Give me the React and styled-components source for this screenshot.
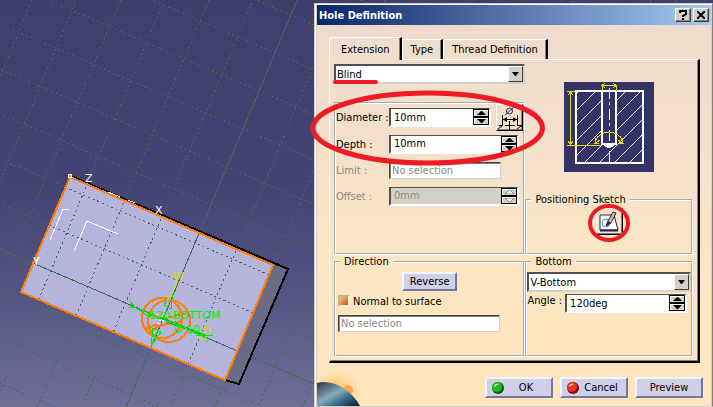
import React, { useState } from 'react'
import styled, { createGlobalStyle } from 'styled-components'

const GlobalStyle = createGlobalStyle`
  *{
    box-sizing: border-box;
  }
  body{
    margin: 0;
    background: #3f3f6e;
    font-family: "DejaVu Sans Condensed", "DejaVu Sans", sans-serif;
    font-size: 11px;
    line-height: 13px;
    color: #000;
  }
  button, input, select{
    font: inherit;
    color: inherit;
    margin: 0;
  }
`

// sketch grid: one step along each direction, starting from a crossing of the solid line
const origin = [243, 129]
const u = [37.4, 16.1]
const v = [-16, 38]
const at = (i, j) => [origin[0] + i * u[0] + j * v[0], origin[1] + i * u[1] + j * v[1]]

const gridLines = []
for (let i = -16; i <= 16; i++) {
  const [x1, y1] = at(i, -16)
  const [x2, y2] = at(i, 16)
  gridLines.push({ key: `u${i}`, x1, y1, x2, y2, solid: i === 0 })
}
for (let j = -16; j <= 16; j++) {
  const [x1, y1] = at(-16, j)
  const [x2, y2] = at(16, j)
  gridLines.push({ key: `v${j}`, x1, y1, x2, y2, solid: j === 5 })
}

function Grid({ color }) {
  return (
    <g stroke={color} strokeWidth="1">
      {gridLines.map(({ key, solid, ...line }) => (
        <line key={key} {...line} strokeDasharray={solid ? undefined : '2 3'} />
      ))}
    </g>
  )
}

function Viewport() {
  return (
    <Scene aria-label="3D view">
      <defs>
        <clipPath id="face"><path d="M70 177 273 265 225 380 21 292Z" /></clipPath>
      </defs>
      <Grid color="#456b57" />
      <path d="M273 265 288 269 239 384 225 380Z" fill="#6b6b83" />
      <path d="M70 177 273 265 225 380 21 292Z" fill="#b4b4dc" />
      <g clipPath="url(#face)"><Grid color="#41655a" /></g>
      <g fill="none">
        <path d="M71 176 274 263 288 269 239 384 225 380" stroke="#000" strokeWidth="2" />
        <path d="M70 177 273 265 225 380 21 292Z" stroke="#ff8000" strokeWidth="2" />
        <path d="M50 240 63 209 69 210M74 251 87 221 118 234" stroke="#fff" />
        <path d="M108 192 120 197M128 200 135 203" stroke="#fff" />
      </g>
      <circle cx="70" cy="176" r="2" fill="#ff8000" stroke="#fff" />
      <g fill="none" stroke="#fff">
        <path d="M157 314 166 324M165 313 157 325" strokeDasharray="2 2" />
      </g>
      <g fill="#fff">
        <text x="85" y="182">Z</text>
        <text x="155" y="214">X</text>
        <text x="33" y="265">Y</text>
      </g>
      <g fill="none" stroke="#ff8000" strokeWidth="2">
        <circle cx="162" cy="318" r="20" />
        <circle cx="169" cy="321" r="21" />
        <path d="M142 326C151 332 151 324 158 325M149 311C160 325 176 314 189 313M150 334C160 318 176 329 183 318" />
      </g>
      <g fill="none" stroke="#00e600">
        <path d="M129 305 210 339M130 301 135 307 129 307" />
        <path d="M136 308 150 317 153 313M151 346 153 328 161 332 151 346M173 292 164 305 171 309 173 292" />
        <path d="M151 346 158 330M196 335 213 335M196 330 208 342" />
        <path d="M160 317 205 335M166 322 200 334M175 321 182 328" stroke="#00c800" />
      </g>
      <path d="M173 292 178 278M167 301 173 292M197 337 208 340" fill="none" stroke="#dcdc00" />
      <g fill="#00f000">
        <text x="149" y="319">120</text>
        <text x="173" y="319">BOTTOM</text>
        <text x="174" y="333">D 10</text>
      </g>
      <g fill="#dcdc00">
        <text x="173" y="280">W</text>
        <text x="203" y="333">H</text>
      </g>
    </Scene>
  )
}

const hatches = [24, 41, 56, 71, 86, 101, 116, 131, 146]

function HolePreview() {
  return (
    <svg width="90" height="90" viewBox="0 0 90 90" shapeRendering="crispEdges" role="img" aria-label="Blind hole section">
      <rect width="90" height="90" fill="#333366" />
      <clipPath id="stock"><path d="M11 9H38V62L45 66 52 62V9H79V81H11Z" /></clipPath>
      <g clipPath="url(#stock)" stroke="#fff">
        {hatches.map((c) => <path key={c} d={`M0 ${c} ${c} 0`} />)}
      </g>
      <path d="M38 9H52V62H38Z" fill="#333366" />
      <g fill="none" stroke="#fff">
        <path d="M12 9H79V81H12Z" strokeWidth="2" />
        <path d="M38 9V62H52V9" strokeWidth="2" />
        <path d="M38 62 45 66 52 62Z" fill="#fff" />
        <path d="M45.500 6V80" strokeDasharray="11 3 3 4" />
      </g>
      <g fill="none" stroke="#dede00">
        <path d="M6.500 9V63M3 9.500H11M3 63.500H38M4 13 6.500 10 9 13M4 59 6.500 63 9 59" />
        <path d="M38.500 9V3M52.500 9V3M38 3.500H52M41 1 38 3.500 41 6M49 1 52 3.500 49 6" />
        <path d="M32 58C36 48 54 48 58 58M31 56 32 61 36 58M54 58 58 61 59 56M30 61H35M55 61H60" />
      </g>
    </svg>
  )
}

function DiameterIcon() {
  return (
    <svg width="24" height="24" viewBox="0 0 24 24" fill="none" stroke="#000" aria-hidden="true">
      <ellipse cx="11.500" cy="5" rx="3" ry="3" stroke="#222266" />
      <path d="M7 9 16 1" stroke="#222266" />
      <path d="M4.500 9V20M19.500 9V20M5 13.500H19" />
      <path d="M5 13.500 9 11V16ZM19 13.500 15 11V16Z" fill="#000" stroke="none" />
      <path d="M1 19.500H5M19 19.500H24M7 19.500H17M11.500 15V24" />
      <path d="M0 23 4 20M19 23 23 20" />
    </svg>
  )
}

function SketchIcon() {
  return (
    <svg width="22" height="22" viewBox="0 0 22 22" aria-hidden="true">
      <path d="M2 4H16L20 19H2Z" fill="#fff" stroke="#222255" />
      <circle cx="8" cy="12" r="4" fill="none" stroke="#3f9f9f" />
      <path d="M2 19.500H20" stroke="#222255" strokeWidth="2" />
      <path d="M8 15 10 10 15 1 18 2 13 12Z" fill="#c8c88c" stroke="#222255" />
      <path d="M8 15 10 10 13 12Z" fill="#222255" />
    </svg>
  )
}

function Planet() {
  return (
    <PlanetArt width="50" height="38" viewBox="0 0 50 38" aria-hidden="true">
      <defs>
        <radialGradient id="glow" cx="20" cy="26" r="28" gradientUnits="userSpaceOnUse">
          <stop offset="0" stopColor="#ffb85c" />
          <stop offset="0.500" stopColor="#ffd58a" />
          <stop offset="1" stopColor="#fee5bd" stopOpacity="0" />
        </radialGradient>
        <linearGradient id="globe" x1="0" y1="0" x2="1" y2="1">
          <stop offset="0" stopColor="#26343c" />
          <stop offset="0.450" stopColor="#86aabb" />
          <stop offset="0.700" stopColor="#2f6580" />
          <stop offset="1" stopColor="#0d1a24" />
        </linearGradient>
      </defs>
      <rect width="50" height="38" fill="url(#glow)" />
      <circle cx="31" cy="22" r="5" fill="#ffa65a" />
      <path d="M0 15C14 11 33 20 43 38H0Z" fill="url(#globe)" />
    </PlanetArt>
  )
}

function Orb({ color, dark }) {
  return (
    <svg width="14" height="14" viewBox="0 0 14 14" aria-hidden="true">
      <circle cx="7" cy="7" r="6" fill={dark} />
      <circle cx="6" cy="6" r="5" fill={color} />
      <path d="M3 6C3 3 6 2 8 3 6 4 5 5 3 6Z" fill="#fff" opacity="0.800" />
    </svg>
  )
}

function Combo({ label, value }) {
  return (
    <ComboBox>
      <select aria-label={label} defaultValue={value}>
        <option>{value}</option>
      </select>
      <ComboArrow aria-hidden="true">
        <svg width="7" height="4" viewBox="0 0 7 4"><path d="M0 0H7L4 4H3Z" /></svg>
      </ComboArrow>
    </ComboBox>
  )
}

function Spinner({ id, value, disabled }) {
  return (
    <SpinBox $disabled={disabled}>
      <input id={id} defaultValue={value} disabled={disabled} />
      <Steps>
        <Step type="button" aria-label="Increase" disabled={disabled}>
          <svg width="9" height="4" viewBox="0 0 9 4"><path d="M0 4 4 0H5L9 4Z" /></svg>
        </Step>
        <Step type="button" aria-label="Decrease" disabled={disabled}>
          <svg width="9" height="4" viewBox="0 0 9 4"><path d="M0 0H9L5 4H4Z" /></svg>
        </Step>
      </Steps>
    </SpinBox>
  )
}

function App() {
  const [tab, setTab] = useState('Extension')
  const [normal, setNormal] = useState(true)

  return (
    <Page>
      <GlobalStyle />
      <Viewport />
      <Dialog role="dialog" aria-label="Hole Definition">
        <TitleBar>
          <h1>Hole Definition</h1>
          <CaptionButton type="button" aria-label="Help">
            <svg width="8" height="10" viewBox="0 0 8 10"><path d="M1 3V1H7V4L4 6V7M4 8V10" /></svg>
          </CaptionButton>
          <CaptionButton type="button" aria-label="Close">
            <svg width="8" height="8" viewBox="0 0 8 8"><path d="M0 0 8 8M8 0 0 8" /></svg>
          </CaptionButton>
        </TitleBar>
        <Body>
          <Tabs role="tablist">
            {['Extension', 'Type', 'Thread Definition'].map((name) => (
              <Tab key={name} type="button" role="tab" aria-selected={tab === name} $active={tab === name} onClick={() => setTab(name)}>
                {name}
              </Tab>
            ))}
          </Tabs>
          <Panel>
            <Column>
              <Underlined><Combo label="Extension type" value="Blind" /></Underlined>
              <Parameters>
                <Field>
                  <label htmlFor="diameter">Diameter :</label>
                  <Spinner id="diameter" value="10mm" />
                  <ToolButton type="button" aria-label="Diameter tolerance"><DiameterIcon /></ToolButton>
                </Field>
                <Field>
                  <label htmlFor="depth">Depth :</label>
                  <Spinner id="depth" value="10mm" />
                </Field>
                <Field $muted>
                  <label htmlFor="limit">Limit :</label>
                  <Selection id="limit" defaultValue="No selection" readOnly />
                </Field>
                <Field $muted>
                  <label htmlFor="offset">Offset :</label>
                  <Spinner id="offset" value="0mm" disabled />
                </Field>
                <BigRing viewBox="0 0 236 76" preserveAspectRatio="none" aria-hidden="true">
                  <ellipse cx="118" cy="38" rx="115" ry="35" />
                </BigRing>
              </Parameters>
            </Column>
            <Column>
              <PreviewArea><HolePreview /></PreviewArea>
              <Group $tight>
                <legend>Positioning Sketch</legend>
                <Marked>
                  <ToolButton type="button" aria-label="Edit positioning sketch"><SketchIcon /></ToolButton>
                  <SmallRing viewBox="0 0 42 38" aria-hidden="true">
                    <ellipse cx="21" cy="19" rx="19" ry="17" />
                  </SmallRing>
                </Marked>
              </Group>
            </Column>
            <Group>
              <legend>Direction</legend>
              <Direction>
                <PushButton type="button" $small>Reverse</PushButton>
                <Check>
                  <input type="checkbox" checked={normal} onChange={() => setNormal(!normal)} />
                  Normal to surface
                </Check>
                <Selection aria-label="Direction reference" defaultValue="No selection" readOnly />
              </Direction>
            </Group>
            <Group>
              <legend>Bottom</legend>
              <Combo label="Bottom type" value="V-Bottom" />
              <AngleRow>
                <label htmlFor="angle">Angle :</label>
                <Spinner id="angle" value="120deg" />
              </AngleRow>
            </Group>
          </Panel>
          <Footer>
            <PushButton type="button"><Orb color="#22bb22" dark="#086008" /><span>OK</span></PushButton>
            <PushButton type="button"><Orb color="#ee3322" dark="#7a1008" /><span>Cancel</span></PushButton>
            <PushButton type="button">Preview</PushButton>
          </Footer>
          <Planet />
        </Body>
      </Dialog>
    </Page>
  )
}

const Page = styled.main`
position: relative;
display: grid;
grid-template-columns: 314fr 399fr;
min-height: 100vh;
padding-top: 3px;
overflow: hidden;
background: linear-gradient(#3f3f6e 0%, #444474 45%, #545483 72%, #6f6f98 100%);
`

const Scene = styled.svg`
position: absolute;
inset: 0;
width: 100%;
height: 100%;
shape-rendering: crispEdges;
text{
  font-family: "DejaVu Sans", sans-serif;
  font-weight: 400;
  font-size: 11px;
}
`

const Dialog = styled.section`
position: relative;
grid-column: 2;
display: flex;
flex-direction: column;
min-width: 0;
padding: 1px 0 0 1px;
border: 1px solid;
border-color: #d4d0c8 #808080 #d4d0c8 #d4d0c8;
background: #d4d0c8;
box-shadow: inset 1px 1px #fff;
`

const TitleBar = styled.header`
display: flex;
align-items: center;
gap: 2px;
height: 20px;
margin: 0 1px;
padding: 0 2px;
background: linear-gradient(90deg, #0a246a, #a6caf0);
h1{
  flex: 1;
  margin: 0;
  font-size: 11px;
  font-weight: bold;
  color: #fff;
}
`

const CaptionButton = styled.button`
display: flex;
align-items: center;
justify-content: center;
width: 16px;
height: 14px;
padding: 0;
border: 1px solid;
border-color: #fff #404040 #404040 #fff;
background: #d4d0c8;
box-shadow: inset -1px -1px #808080;
svg{
  fill: none;
  stroke: #000;
  stroke-width: 2;
}
`

const Body = styled.div`
position: relative;
flex: 1;
margin: 0 1px;
padding: 12px 11px 7px 12px;
background: linear-gradient(#eddccd 0%, #f2e0ca 30%, #f7e4c6 50%, #fee5bf 80%);
`

const Tabs = styled.div`
display: flex;
align-items: flex-end;
height: 22px;
`

const Tab = styled.button`
position: relative;
height: ${(p) => (p.$active ? 23 : 20)}px;
margin-bottom: ${(p) => (p.$active ? -1 : 0)}px;
padding: 0 ${(p) => (p.$active ? 10 : 8)}px 0 ${(p) => (p.$active ? 11 : 8)}px;
z-index: 1;
border: 0 solid #fff;
border-width: 1px 2px 0 1px;
border-right-color: #000;
border-radius: 3px 0 0 0;
background: ${(p) => (p.$active ? '#eedecc' : 'transparent')};
box-shadow: inset -1px 0 #808080;
`

const Panel = styled.div`
display: grid;
grid-template-columns: 192fr 168fr;
grid-template-rows: minmax(191px, auto) minmax(102px, auto);
padding: 4px 5px 4px 4px;
border: 1px solid #fff;
border-right: 2px solid #000;
border-bottom: 2px solid #000;
box-shadow: inset -1px -1px #808080;
`

const Column = styled.div`
display: flex;
flex-direction: column;
min-width: 0;
`

const Group = styled.fieldset`
min-width: 0;
margin: 0;
padding: ${(p) => (p.$tight ? 2 : 4)}px 0 4px;
border: 2px groove #fff;
legend{
  margin-left: 4px;
  padding: 0 4px;
}
`

const Underlined = styled.div`
position: relative;
&::after{
  content: '';
  position: absolute;
  left: -1px;
  bottom: 0;
  width: 45px;
  height: 4px;
  border-radius: 2px;
  background: #ed1c24;
}
`

const ComboBox = styled.div`
position: relative;
height: 20px;
select{
  appearance: none;
  display: block;
  width: 100%;
  height: 100%;
  padding: 0 20px 0 1px;
  border: 2px solid;
  border-color: #505050 #d4d0c8 #d4d0c8 #505050;
  border-radius: 0;
  background: #fff;
}
`

const ComboArrow = styled.span`
position: absolute;
top: 2px;
right: 2px;
bottom: 2px;
display: flex;
align-items: center;
justify-content: center;
width: 15px;
border: 1px solid;
border-color: #fff #404040 #404040 #fff;
background: #d4d0c8;
pointer-events: none;
`

const Parameters = styled.div`
position: relative;
flex: 1;
margin-top: 18px;
border: 2px groove #fff;
`

const Field = styled.div`
display: grid;
grid-template-columns: 53px 1fr 27px;
align-items: center;
min-height: 26px;
color: ${(p) => (p.$muted ? '#8a8a80' : '#000')};
label{
  white-space: nowrap;
}
> :nth-child(2){
  margin-right: 5px;
}
&:not(:first-child) > :nth-child(2){
  grid-column: 2 / 4;
  margin-right: 4px;
}
> input{
  width: 112px;
}
`

const SpinBox = styled.div`
display: flex;
flex: 1;
min-width: 0;
height: 19px;
border: 2px solid;
border-color: #505050 #fff #fff #505050;
border-top-width: 1px;
background: ${(p) => (p.$disabled ? '#d4d0c8' : '#fff')};
input{
  flex: 1;
  width: 0;
  min-width: 0;
  padding: 0 3px;
  border: 0;
  background: none;
  &:disabled{
    color: #8a8a80;
  }
}
`

const Steps = styled.div`
display: flex;
flex-direction: column;
width: 16px;
`

const Step = styled.button`
flex: 1;
display: flex;
align-items: center;
justify-content: center;
min-height: 0;
padding: 0;
border: 1px solid #000;
background: #d4d0c8;
box-shadow: inset 1px 1px #fff;
&:disabled svg{
  fill: #fff;
  stroke: #808080;
}
`

const Selection = styled.input`
width: 162px;
max-width: 100%;
height: 17px;
padding: 0 2px;
border: 1px solid;
border-color: #404040 #d4d0c8 #d4d0c8 #404040;
background: #fff;
box-shadow: inset 1px 1px #808080;
&&{
  color: #8a8a80;
}
`

const ToolButton = styled.button`
display: flex;
align-items: center;
justify-content: center;
width: 27px;
height: 27px;
padding: 0;
border: 1px solid;
border-color: #fff #000 #000 #fff;
background: none;
box-shadow: inset -1px -1px #808080;
`

const PreviewArea = styled.div`
flex: 1;
padding-top: 18px;
text-align: center;
`

const Marked = styled.div`
position: relative;
display: flex;
justify-content: center;
padding-bottom: 14px;
`

const Ring = styled.svg`
position: absolute;
overflow: visible;
pointer-events: none;
fill: none;
stroke: #ed1c24;
stroke-width: 5;
`

const BigRing = styled(Ring)`
top: -14px;
left: -26px;
width: calc(100% + 48px);
height: 76px;
z-index: 1;
`

const SmallRing = styled(Ring)`
top: -4px;
left: calc(50% - 21px);
width: 42px;
height: 38px;
stroke-width: 4;
`

const Direction = styled.div`
display: flex;
flex-direction: column;
align-items: flex-start;
padding: 0 2px;
> button{
  align-self: center;
}
> input{
  margin-top: 5px;
}
`

const Check = styled.label`
display: flex;
align-items: center;
gap: 3px;
height: 18px;
margin-top: 1px;
input{
  appearance: none;
  width: 12px;
  height: 12px;
  border: 2px solid;
  border-color: #c8b48c #fff3dc #fff3dc #c8b48c;
  background: #fee5bd;
  &:checked{
    background: linear-gradient(135deg, #ffc080, #c05a08);
  }
}
`

const AngleRow = styled.div`
display: flex;
gap: 3px;
margin-top: 2px;
padding-right: 4px;
label{
  white-space: nowrap;
}
`

const Footer = styled.footer`
position: relative;
z-index: 1;
display: flex;
justify-content: flex-end;
gap: 7px;
margin: 14px -3px 0 0;
`

const PushButton = styled.button`
display: flex;
align-items: center;
justify-content: center;
width: ${(p) => (p.$small ? 55 : 68)}px;
height: ${(p) => (p.$small ? 19 : 21)}px;
padding: 0 4px;
border: 2px solid;
border-color: #f4f4ff #77779a #77779a #f4f4ff;
background: #cfcfe8;
white-space: nowrap;
span{
  flex: 1;
  text-align: center;
}
`

const PlanetArt = styled.svg`
position: absolute;
left: 0;
bottom: 0;
`

export default App
